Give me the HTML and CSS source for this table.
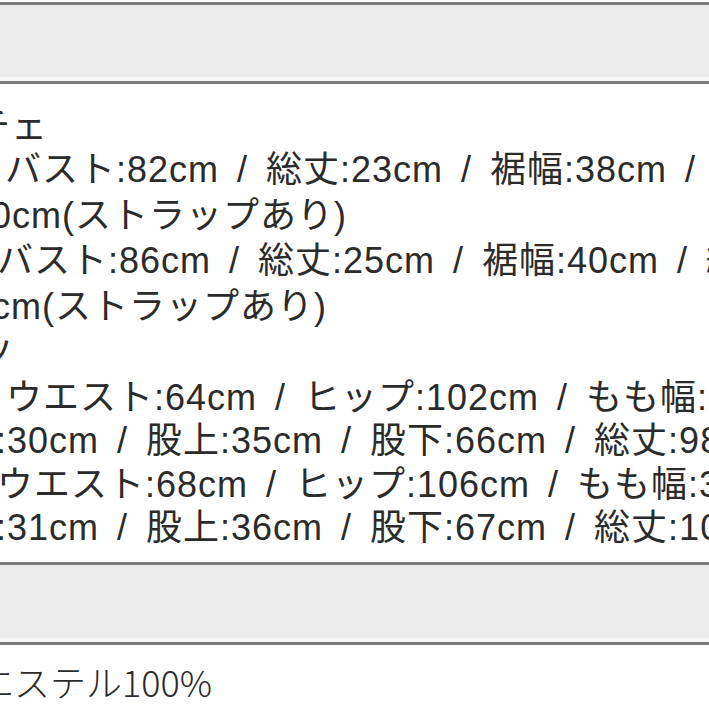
FILE: index.html
```html
<!DOCTYPE html>
<html lang="ja">
<head>
<meta charset="utf-8">
<link rel="stylesheet" href="styles.css">
</head>
<body>
<div class="sheet">
  <div class="gap-top"></div>
  <div class="head-row"></div>
  <div class="cell">
    <div class="block upper">
      <div class="line l1">チェ</div>
      <div class="line l2">バスト:82cm / 総丈:23cm / 裾幅:38cm / ストラップ</div>
      <div class="line l3">0cm(ストラップあり)</div>
      <div class="line l4">バスト:86cm / 総丈:25cm / 裾幅:40cm / 総丈</div>
      <div class="line l5">cm(ストラップあり)</div>
    </div>
    <div class="block lower">
      <div class="line l6">ツ</div>
      <div class="line l7">ウエスト:64cm / ヒップ:102cm / もも幅:32cm</div>
      <div class="line l8">:30cm / 股上:35cm / 股下:66cm / 総丈:98cm</div>
      <div class="line l9">ウエスト:68cm / ヒップ:106cm / もも幅:33cm</div>
      <div class="line l10">:31cm / 股上:36cm / 股下:67cm / 総丈:100cm</div>
    </div>
  </div>
  <div class="head-row mid"></div>
  <div class="cell bottom">
    <div class="line l11">エステル100%</div>
  </div>
</div>
</body>
</html>
```

FILE: styles.css
```css
html, body {
  margin: 0;
  padding: 0;
  background: #ffffff;
}
.sheet {
  width: 709px;
  height: 709px;
  overflow: hidden;
  font-family: "Liberation Sans", "Noto Sans CJK JP", sans-serif;
  color: #2b2b2b;
  font-size: 36px;
  letter-spacing: 1px;
  word-spacing: 7px;
}
.gap-top {
  height: 2px;
  background: #ffffff;
}
.head-row {
  height: 76px;
  background: #ebebeb;
  border-top: 3px solid #7b7b7b;
  border-bottom: 3px solid #7b7b7b;
  box-shadow: inset 0 -4px 0 #f6f6f6;
}
.head-row.mid {
  height: 77px;
}
.cell {
  height: 478px;
  overflow: hidden;
}
.cell.bottom {
  height: 57px;
}
.block {
  display: flex;
  flex-direction: column;
}
.upper {
  padding-top: 23px;
}
.lower {
  padding-top: 3px;
}
.line {
  white-space: nowrap;
  line-height: 45.5px;
  height: 45.5px;
}
.lower .line {
  line-height: 43.5px;
  height: 43.5px;
}
.l1 { margin-left: -26px; height: 40px; line-height: 40px; }
.l2 { margin-left: 5px; }
.l3 { margin-left: -9px; }
.l4 { margin-left: -3px; }
.l5 { margin-left: -8px; }
.l6 { margin-left: -24px; }
.l7 { margin-left: 6px; }
.l8 { margin-left: -4px; }
.l9 { margin-left: -3px; }
.l10 { margin-left: -4px; }
.l11 {
  margin-left: -22px;
  margin-top: 16px;
  line-height: 40px;
  letter-spacing: 0;
  word-spacing: 0;
  font-family: "Noto Sans CJK JP", sans-serif;
  font-weight: 300;
}
```
